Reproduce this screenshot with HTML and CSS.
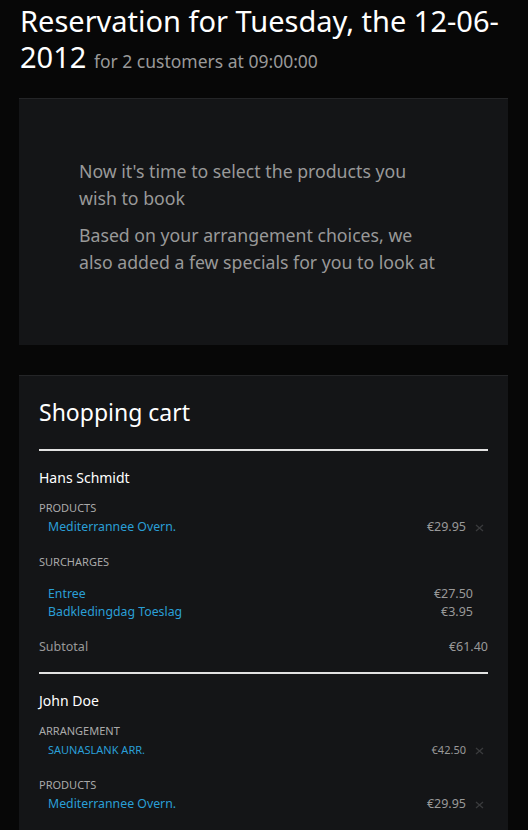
FILE: index.html
```html
<!DOCTYPE html>
<html lang="en">
<head>
<meta charset="utf-8">
<title>Reservation</title>
<link rel="stylesheet" href="styles.css">
</head>
<body>
<div class="page">
  <h1 class="title">Reservation for Tuesday, the 12-06-2012 <small class="subtitle">for 2 customers at 09:00:00</small></h1>

  <div class="well intro">
    <p>Now it's time to select the products you wish to book</p>
    <p>Based on your arrangement choices, we also added a few specials for you to look at</p>
  </div>

  <div class="well cart">
    <h2 class="cart-title">Shopping cart</h2>
    <hr class="rule">

    <div class="customer">
      <div class="customer-name">Hans Schmidt</div>
      <div class="section">
        <div class="label">PRODUCTS</div>
        <div class="item">
          <a class="item-name">Mediterrannee Overn.</a>
          <span class="price">€29.95</span>
          <span class="remove"><svg width="9" height="8" viewBox="0 0 9 8"><path d="M1 1 L8 7 M8 1 L1 7" stroke="#3a3b3d" stroke-width="1.3" fill="none"/></svg></span>
        </div>
      </div>
      <div class="section">
        <div class="label">SURCHARGES</div>
        <div class="surcharges">
          <div class="item">
            <a class="item-name">Entree</a>
            <span class="price price-wide">€27.50</span>
          </div>
          <div class="item">
            <a class="item-name">Badkledingdag Toeslag</a>
            <span class="price price-wide">€3.95</span>
          </div>
        </div>
      </div>
      <div class="subtotal">
        <span>Subtotal</span>
        <span>€61.40</span>
      </div>
    </div>
    <hr class="rule">

    <div class="customer">
      <div class="customer-name">John Doe</div>
      <div class="section">
        <div class="label">ARRANGEMENT</div>
        <div class="item">
          <a class="item-name small">SAUNASLANK ARR.</a>
          <span class="price small">€42.50</span>
          <span class="remove"><svg width="9" height="8" viewBox="0 0 9 8"><path d="M1 1 L8 7 M8 1 L1 7" stroke="#3a3b3d" stroke-width="1.3" fill="none"/></svg></span>
        </div>
      </div>
      <div class="section">
        <div class="label">PRODUCTS</div>
        <div class="item">
          <a class="item-name">Mediterrannee Overn.</a>
          <span class="price">€29.95</span>
          <span class="remove"><svg width="9" height="8" viewBox="0 0 9 8"><path d="M1 1 L8 7 M8 1 L1 7" stroke="#3a3b3d" stroke-width="1.3" fill="none"/></svg></span>
        </div>
      </div>
    </div>
  </div>
</div>
</body>
</html>
```
FILE: styles.css
```css
html, body {
  margin: 0;
  padding: 0;
}
body {
  background: #0b0c0c;
  font-family: "Noto Sans", "Open Sans", "DejaVu Sans", sans-serif;
  color: #999;
}
.page {
  width: 489px;
  background: #070707;
  padding: 3px 20px 40px 19px;
}
.title {
  margin: 0 0 23px 1px;
  font-size: 29px;
  line-height: 36px;
  font-weight: normal;
  color: #fff;
}
.subtitle {
  font-size: 17.5px;
  line-height: 20px;
  color: #999;
}
.well {
  background: #141517;
  border-top: 1px solid #242527;
}
.intro {
  padding: 59px 68px 59px 60px;
  margin-bottom: 30px;
}
.intro p {
  margin: 0 0 10px;
  font-size: 17.7px;
  line-height: 27px;
  color: #999;
}
.cart {
  padding: 21px 20px 20px 20px;
}
.cart-title {
  margin: 0 0 22px;
  font-size: 23px;
  line-height: 30px;
  font-weight: normal;
  color: #fff;
}
.rule {
  margin: 0;
  border: 0;
  height: 2px;
  background: #e2e2e2;
}
.customer {
  padding-top: 18px;
  padding-bottom: 16px;
}
.customer-name {
  font-size: 14px;
  line-height: 18px;
  color: #fff;
  margin-bottom: 12px;
}
.section {
  margin-bottom: 18px;
}
.label {
  font-size: 11px;
  line-height: 18px;
  color: #aaa;
}
.surcharges {
  padding-top: 13px;
}
.item {
  display: flex;
  align-items: center;
  height: 18px;
  padding-left: 9px;
}
.item-name {
  flex: 1;
  font-size: 12.3px;
  color: #2a9fd6;
}
.item-name.small {
  font-size: 11px;
}
.price {
  font-size: 12.5px;
  color: #999;
}
.price.small {
  font-size: 11px;
}
.price-wide {
  margin-right: 15px;
}
.remove {
  display: flex;
  width: 22px;
  justify-content: flex-end;
  padding-top: 3px;
  padding-right: 4px;
  box-sizing: border-box;
}
.subtotal {
  display: flex;
  justify-content: space-between;
  font-size: 12.5px;
  line-height: 18px;
  color: #999;
}
```
